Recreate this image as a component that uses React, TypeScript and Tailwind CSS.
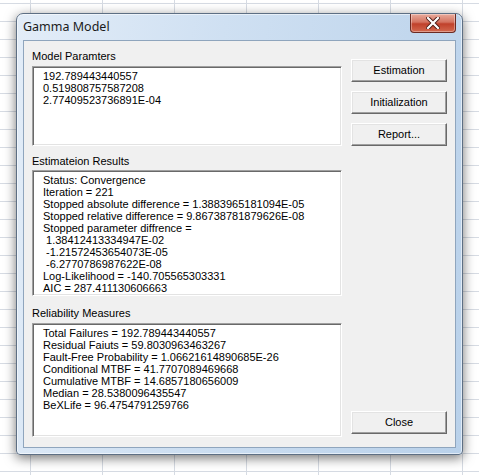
const params = ["192.789443440557", "0.519808757587208", "2.77409523736891E-04"];

const results = [
	"Status: Convergence",
	"Iteration = 221",
	"Stopped absolute difference = 1.3883965181094E-05",
	"Stopped relative difference = 9.86738781879626E-08",
	"Stopped parameter diffrence =",
	" 1.38412413334947E-02",
	" -1.21572453654073E-05",
	" -6.2770786987622E-08",
	"Log-Likelihood = -140.705565303331",
	"AIC = 287.411130606663",
];

const measures = [
	"Total Failures = 192.789443440557",
	"Residual Faiuts = 59.8030963463267",
	"Fault-Free Probability = 1.06621614890685E-26",
	"Conditional MTBF = 41.7707089469668",
	"Cumulative MTBF = 14.6857180656009",
	"Median = 28.5380096435547",
	"BeXLife = 96.4754791259766",
];

type TextBoxProps = {
	lines: string[];
	height: string;
};

const TextBox = ({ lines, height }: TextBoxProps) => {
	return (
		<div
			className={`${height} w-[310px] border border-t-[#a0a0a0] border-l-[#a0a0a0] border-b-white border-r-white bg-white shadow-[inset_1px_1px_0_#696969,inset_-1px_-1px_0_#e3e3e3] pl-[10px] pt-[3px] text-[11px] leading-[12px] text-black`}
		>
			{lines.map((line, i) => (
				<div key={i} className="whitespace-pre">
					{line}
				</div>
			))}
		</div>
	);
};

const Button = ({ label }: { label: string }) => {
	return (
		<div className="flex h-[23px] w-[96px] items-center justify-center border border-t-white border-l-white border-b-[#696969] border-r-[#696969] bg-[#f0f0f0] text-[11px] text-black shadow-[inset_-1px_-1px_0_#a0a0a0,inset_1px_1px_0_#e3e3e3]">
			{label}
		</div>
	);
};

export default function App() {
	return (
		<div className="h-[475px] w-[479px] overflow-hidden bg-white bg-[linear-gradient(to_right,#d6dbe3_1px,transparent_1px),linear-gradient(to_bottom,#d6dbe3_1px,transparent_1px)] pl-[16px] pt-[13px] font-['Liberation_Sans',Arial,sans-serif] [background-position:30px_3px] [background-size:72px_18px]">
			<div className="flex h-[442px] w-[447px] flex-col rounded-t-[7px] rounded-b-[4px] border border-[#5d6f84] bg-[linear-gradient(100deg,#e3edf8_0%,#cfe0f2_40%,#b9d1ea_100%)] shadow-[0_3px_12px_rgba(0,0,0,0.55),inset_0_0_0_1px_rgba(255,255,255,0.55)]">
				{/* title bar */}
				<div className="flex h-[26px] justify-between">
					<div className="pl-[6px] pt-[5px] font-['Noto_Sans',sans-serif] text-[12.5px] leading-[16px] text-[#1b1b1b]">
						Gamma Model
					</div>
					<div className="mr-[6px] flex h-[19px] w-[46px] items-center justify-center rounded-b-[4px] border border-t-0 border-[#6b2a22] bg-[linear-gradient(to_bottom,#e9ab9c_0%,#d47360_45%,#c0412b_55%,#d3694f_100%)] shadow-[inset_0_0_0_1px_rgba(255,255,255,0.35)]">
						<svg width="14" height="12" viewBox="0 0 14 12">
							<path d="M2 1 L12 11 M12 1 L2 11" stroke="#4a1a14" strokeWidth="4" strokeLinecap="square" />
							<path d="M2 1 L12 11 M12 1 L2 11" stroke="#ffffff" strokeWidth="2.2" strokeLinecap="square" />
						</svg>
					</div>
				</div>

				{/* client area */}
				<div className="mx-[6px] flex h-[408px] border border-[#8fa5bd] bg-[#f0f0f0]">
					<div className="flex flex-col pl-[8px] pt-[9px] text-[11px] leading-[12px] text-black">
						<div className="mb-[4px]">Model Paramters</div>
						<TextBox lines={params} height="h-[80px]" />
						<div className="mb-[3px] mt-[9px]">Estimateion Results</div>
						<TextBox lines={results} height="h-[126px]" />
						<div className="mb-[4px] mt-[11px]">Reliability Measures</div>
						<TextBox lines={measures} height="h-[114px]" />
					</div>
					<div className="ml-[9px] flex flex-col gap-[9px] pb-[13px] pt-[18px]">
						<Button label="Estimation" />
						<Button label="Initialization" />
						<Button label="Report..." />
						<div className="mt-auto">
							<Button label="Close" />
						</div>
					</div>
				</div>
			</div>
		</div>
	);
}
